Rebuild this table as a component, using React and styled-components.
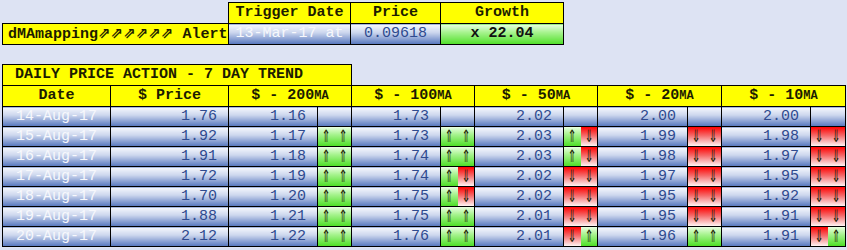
import React from 'react'
import styled, { createGlobalStyle } from 'styled-components'

const GlobalStyle = createGlobalStyle`
  body {
    margin: 0;
    padding: 2px;
    background: #dde3f3;
    font-family: "Liberation Mono", "DejaVu Sans", monospace;
    font-size: 15px;
  }
`

const blueGrad = 'linear-gradient(to bottom, #f6f8fd 0%, #cdd7ee 40%, #5475bd 100%)'
const greenGrad = 'linear-gradient(to bottom, #eaffe2 0%, #a6f38e 40%, #4fdf28 100%)'
const redGrad = 'linear-gradient(to bottom, #ff0000 0%, #f56a6a 45%, #fff4f4 100%)'

const Table = styled.table`
  border-collapse: collapse;
  table-layout: fixed;
  width: ${p => p.$width}px;

  td {
    border: 1px solid #000;
    padding: 0;
    white-space: nowrap;
    overflow: hidden;
    line-height: 18px;
  }
`

const TopTable = styled(Table)`
  margin-bottom: 19px;
  tr { height: 21px; }
`

const Blank = styled.td`
  && { border: none; }
`

const Head = styled.td`
  background: #ffff00;
  color: #1c1c00;
  font-weight: bold;
  text-align: center;
`

const Caption = styled(Head)`
  text-align: left;
  padding-left: 12px !important;
`

const Alert = styled(Head)`
  text-align: left;
  padding-left: 5px !important;
`

const AlertArrows = styled.span`
  font-family: "DejaVu Sans", sans-serif;
  font-size: 15px;
`

const Blue = styled.td`
  background: ${blueGrad};
  color: ${p => (p.$light ? '#f7f8fc' : '#2f4a8f')};
  text-align: ${p => (p.$right ? 'right' : 'center')};
  padding-right: ${p => (p.$right ? '11px' : '0')} !important;
`

const Growth = styled.td`
  background: ${greenGrad};
  color: #111;
  font-weight: bold;
  text-align: center;
`

const Small = styled.span`
  font-size: 12px;
`

const HeadRow = styled.tr`
  height: 21px;
`

const DataRow = styled.tr`
  height: 20px;
`

const ArrowCell = styled.td`
  background: ${blueGrad};
`

const Halves = styled.div`
  display: flex;
  height: 19px;
`

const Half = styled.div`
  flex: 1;
  display: flex;
  align-items: center;
  justify-content: center;
  background: ${p => (p.$up ? greenGrad : redGrad)};
`

const Glyph = styled.span`
  display: inline-block;
  color: #1e1e04;
  font-family: "DejaVu Sans", sans-serif;
  font-size: 17px;
  line-height: 19px;
  transform: scaleX(0.62);
`

const cols = [108, 118, 89, 34, 89, 34, 89, 34, 90, 34, 89, 35]

const rows = [
  ['14-Aug-17', '1.76', ['1.16', ''], ['1.73', ''], ['2.02', ''], ['2.00', ''], ['2.00', '']],
  ['15-Aug-17', '1.92', ['1.17', 'UU'], ['1.73', 'UU'], ['2.03', 'UD'], ['1.99', 'DD'], ['1.98', 'DD']],
  ['16-Aug-17', '1.91', ['1.18', 'UU'], ['1.74', 'UU'], ['2.03', 'UD'], ['1.98', 'DD'], ['1.97', 'DD']],
  ['17-Aug-17', '1.72', ['1.19', 'UU'], ['1.74', 'UD'], ['2.02', 'DD'], ['1.97', 'DD'], ['1.95', 'DD']],
  ['18-Aug-17', '1.70', ['1.20', 'UU'], ['1.75', 'UD'], ['2.02', 'DD'], ['1.95', 'DD'], ['1.92', 'DD']],
  ['19-Aug-17', '1.88', ['1.21', 'UU'], ['1.75', 'UU'], ['2.01', 'DD'], ['1.95', 'DD'], ['1.91', 'DD']],
  ['20-Aug-17', '2.12', ['1.22', 'UU'], ['1.76', 'UU'], ['2.01', 'DU'], ['1.96', 'UU'], ['1.91', 'DU']],
]

const averages = ['200', '100', '50', '20', '10']

function Arrows({ code }) {
  if (!code) return <ArrowCell />
  return (
    <ArrowCell>
      <Halves>
        {code.split('').map((c, i) => (
          <Half key={i} $up={c === 'U'}>
            <Glyph>{c === 'U' ? '⇑' : '⇓'}</Glyph>
          </Half>
        ))}
      </Halves>
    </ArrowCell>
  )
}

export default function App() {
  return (
    <>
      <GlobalStyle />
      <TopTable $width={561}>
        <colgroup>
          <col style={{ width: 226 }} />
          <col style={{ width: 122 }} />
          <col style={{ width: 90 }} />
          <col style={{ width: 123 }} />
        </colgroup>
        <tbody>
          <tr>
            <Blank />
            <Head>Trigger Date</Head>
            <Head>Price</Head>
            <Head>Growth</Head>
          </tr>
          <tr>
            <Alert>dMAmapping<AlertArrows>⇗⇗⇗⇗⇗⇗</AlertArrows> Alert</Alert>
            <Blue $light>13-Mar-17 at</Blue>
            <Blue>0.09618</Blue>
            <Growth>x 22.04</Growth>
          </tr>
        </tbody>
      </TopTable>

      <Table $width={843}>
        <colgroup>
          {cols.map((w, i) => <col key={i} style={{ width: w }} />)}
        </colgroup>
        <tbody>
          <HeadRow>
            <Caption colSpan={4}>DAILY PRICE ACTION - 7 DAY TREND</Caption>
            <Blank colSpan={8} />
          </HeadRow>
          <HeadRow>
            <Head>Date</Head>
            <Head>$ Price</Head>
            {averages.map(a => (
              <Head key={a} colSpan={2}>$ - {a}<Small>MA</Small></Head>
            ))}
          </HeadRow>
          {rows.map(([date, price, ...mas]) => (
            <DataRow key={date}>
              <Blue $light>{date}</Blue>
              <Blue $right>{price}</Blue>
              {mas.map(([v, code], i) => (
                <React.Fragment key={i}>
                  <Blue $right>{v}</Blue>
                  <Arrows code={code} />
                </React.Fragment>
              ))}
            </DataRow>
          ))}
        </tbody>
      </Table>
    </>
  )
}
